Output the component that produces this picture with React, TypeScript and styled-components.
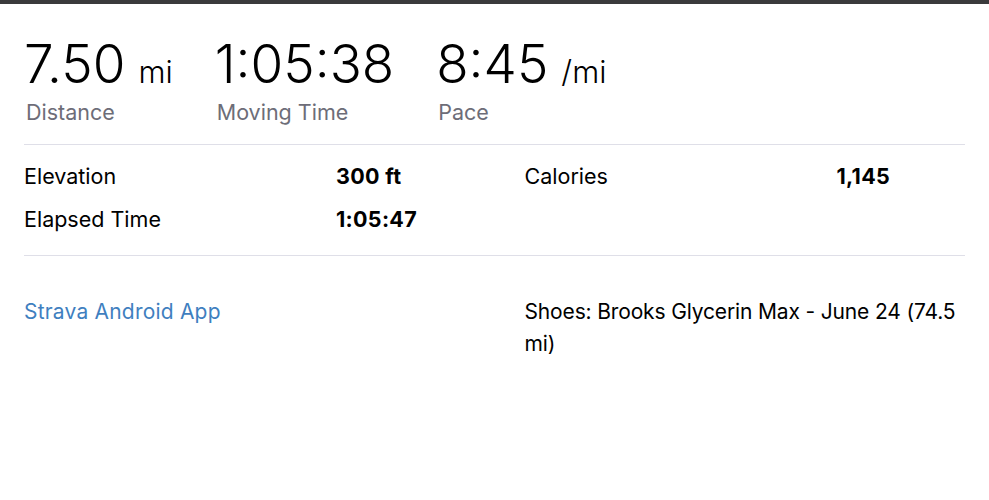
import React from "react";
import styled, { createGlobalStyle } from "styled-components";

const Global = createGlobalStyle`
  html, body { margin: 0; padding: 0; background: #fff; }
  body { font-family: Inter, "Noto Sans", sans-serif; color: #000; }
`;

const TopBar = styled.div`
  height: 4px;
  background: #3a3a3c;
`;

const Page = styled.div`
  padding: 0 24px;
`;

const BigStats = styled.ul`
  list-style: none;
  margin: 0;
  padding: 30px 0 19px;
  display: flex;
  align-items: flex-start;
  gap: 42px;
  border-bottom: 1px solid #dfdfe8;
`;

const BigStat = styled.li`
  display: flex;
  flex-direction: column;
`;

const BigValue = styled.div`
  height: 60px;
  font-size: 53px;
  line-height: 60px;
  font-weight: 300;
  letter-spacing: 0;
  white-space: nowrap;
`;

const Unit = styled.abbr`
  font-size: 31px;
  text-decoration: none;
  margin-left: 13px;
`;

const BigLabel = styled.div`
  margin-top: 5px;
  font-size: 21.5px;
  line-height: 26px;
  color: #6d6d78;
  margin-left: 2px;
`;

const Halves = styled.div<{ $border?: boolean }>`
  display: grid;
  grid-template-columns: 1fr 1fr;
  padding: 10px 0 14px;
  border-bottom: ${(p) => (p.$border ? "1px solid #dfdfe8" : "none")};
`;

const Half = styled.div<{ $right?: boolean }>`
  padding-left: ${(p) => (p.$right ? "30px" : "0")};
`;

const StatRow = styled.div`
  display: grid;
  grid-template-columns: 312px 1fr;
  font-size: 21.5px;
  line-height: 43px;
`;

const RowLabel = styled.span``;

const RowValue = styled.strong`
  font-weight: 700;
  letter-spacing: 0.3px;
`;

const Footer = styled(Halves)`
  padding-top: 40px;
  font-size: 21px;
  line-height: 32px;
`;

const AppLink = styled.a`
  color: #3f7fbf;
  text-decoration: none;
  letter-spacing: 0.2px;
`;

const Gear = styled.div`
  letter-spacing: -0.15px;
`;

export default function App() {
  return (
    <>
      <Global />
      <TopBar />
      <Page>
        <BigStats>
          <BigStat>
            <BigValue>
              7.50<Unit>mi</Unit>
            </BigValue>
            <BigLabel>Distance</BigLabel>
          </BigStat>
          <BigStat>
            <BigValue>1:05:38</BigValue>
            <BigLabel>Moving Time</BigLabel>
          </BigStat>
          <BigStat>
            <BigValue>
              8:45<Unit>/mi</Unit>
            </BigValue>
            <BigLabel>Pace</BigLabel>
          </BigStat>
        </BigStats>
        <Halves $border>
          <Half>
            <StatRow>
              <RowLabel>Elevation</RowLabel>
              <RowValue>300 ft</RowValue>
            </StatRow>
            <StatRow>
              <RowLabel>Elapsed Time</RowLabel>
              <RowValue>1:05:47</RowValue>
            </StatRow>
          </Half>
          <Half $right>
            <StatRow>
              <RowLabel>Calories</RowLabel>
              <RowValue>1,145</RowValue>
            </StatRow>
          </Half>
        </Halves>
        <Footer>
          <Half>
            <AppLink href="#">Strava Android App</AppLink>
          </Half>
          <Half $right>
            <Gear>Shoes: Brooks Glycerin Max - June 24 (74.5 mi)</Gear>
          </Half>
        </Footer>
      </Page>
    </>
  );
}
